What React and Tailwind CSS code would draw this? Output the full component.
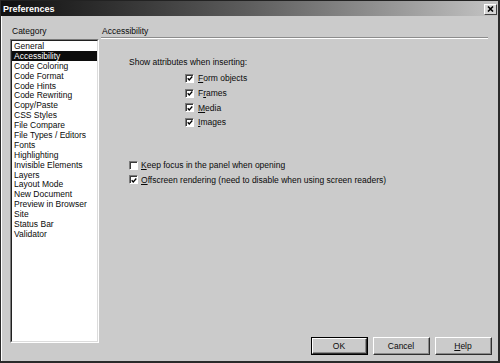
import React from "react";

const categories = [
  "General",
  "Accessibility",
  "Code Coloring",
  "Code Format",
  "Code Hints",
  "Code Rewriting",
  "Copy/Paste",
  "CSS Styles",
  "File Compare",
  "File Types / Editors",
  "Fonts",
  "Highlighting",
  "Invisible Elements",
  "Layers",
  "Layout Mode",
  "New Document",
  "Preview in Browser",
  "Site",
  "Status Bar",
  "Validator",
];

function Box({ checked }) {
  return (
    <div className="w-[9px] h-[9px] border-t border-l border-[#7a7a7a] border-b border-r border-b-white border-r-white shrink-0">
      <div className="w-full h-full bg-white border-t border-l border-[#3a3a3a] border-b-0 border-r-0 flex items-center justify-center">
        {checked && (
          <svg width="7" height="7" viewBox="0 0 7 7">
            <path d="M0.8 3.2 L2.6 5.2 L6.2 1.2" fill="none" stroke="#000" strokeWidth="1.5" />
          </svg>
        )}
      </div>
    </div>
  );
}

function Check({ checked, children, gap = "gap-[4px]" }) {
  return (
    <div className={`flex items-center h-[14.7px] ${gap}`}>
      <Box checked={checked} />
      <span className="leading-[10px]">{children}</span>
    </div>
  );
}

function Button({ children, def }) {
  return (
    <div className={`w-[57px] h-[18px] ${def ? "border border-black" : ""}`}>
      <div className="w-full h-full border-t border-l border-white border-b border-r border-b-[#303030] border-r-[#303030]">
        <div className="w-full h-full border-b border-r border-b-[#8a8a8a] border-r-[#8a8a8a] flex items-center justify-center leading-[10px]">
          {children}
        </div>
      </div>
    </div>
  );
}

export default function App() {
  return (
    <div
      className="w-[500px] h-[363px] bg-[#cbcbcb] text-[#0a0a0a] text-[8.5px] flex flex-col overflow-hidden border-l border-r-2 border-b-2 border-l-[#2a2a2a] border-r-[#2a2a2a] border-b-[#2a2a2a]"
      style={{ fontFamily: '"Liberation Sans", Arial, sans-serif' }}
    >
      {/* Title bar */}
      <div className="h-[16px] shrink-0 flex items-center justify-between pl-[2px] pr-[1px] bg-linear-to-r from-[#101010] via-[#5e5e5e] to-[#c4c4c4] border-t border-[#222]">
        <span className="text-white font-bold text-[9px] leading-[10px]">Preferences</span>
        <div className="w-[13px] h-[11px] mt-[1px] bg-[#d6d6d6] border-t border-l border-white border-b border-r border-b-[#404040] border-r-[#404040] flex items-center justify-center">
          <svg width="7" height="6" viewBox="0 0 7 6">
            <path d="M1 0.5 L6 5.5 M6 0.5 L1 5.5" stroke="#000" strokeWidth="1.6" />
          </svg>
        </div>
      </div>

      {/* Body */}
      <div className="flex-1 flex border-l border-white">
        {/* Left column */}
        <div className="flex flex-col pl-[8px] pt-[10px] pb-[18px] w-[97px]">
          <div className="leading-[10px] pl-[2px] h-[10px]">Category</div>
          <div className="mt-[3px] flex-1 border-t border-l border-[#7a7a7a] border-b border-r border-b-white border-r-white">
            <div className="w-full h-full bg-white border-t border-l border-[#202020] border-b border-r border-b-[#dcdcdc] border-r-[#dcdcdc]">
              {categories.map((c) => (
                <div
                  key={c}
                  className={`h-[9.9px] leading-[10px] pl-[2px] whitespace-nowrap ${
                    c === "Accessibility" ? "bg-[#0c0c0c] text-white" : ""
                  }`}
                >
                  {c}
                </div>
              ))}
            </div>
          </div>
        </div>

        {/* Right column */}
        <div className="flex-1 flex flex-col pl-[2px] pt-[10px] pb-[6px]">
          <div className="leading-[10px] h-[10px] pl-[1px]">Accessibility</div>
          <div className="mt-[1px] w-[387px] border-t border-[#8c8c8c] border-b border-b-white" />

          <div className="pl-[28px] mt-[18px] leading-[10px]">Show attributes when inserting:</div>

          <div className="pl-[84px] mt-[4px] flex flex-col">
            <Check checked><u>F</u>orm objects</Check>
            <Check checked>F<u>r</u>ames</Check>
            <Check checked><u>M</u>edia</Check>
            <Check checked><u>I</u>mages</Check>
          </div>

          <div className="pl-[28px] mt-[28px] flex flex-col">
            <Check gap="gap-[3px]"><u>K</u>eep focus in the panel when opening</Check>
            <Check checked gap="gap-[3px]"><u>O</u>ffscreen rendering (need to disable when using screen readers)</Check>
          </div>

          <div className="mt-auto flex justify-end gap-[5px] pr-[6px]">
            <Button def>OK</Button>
            <Button>Cancel</Button>
            <Button><u>H</u>elp</Button>
          </div>
        </div>
      </div>
    </div>
  );
}
